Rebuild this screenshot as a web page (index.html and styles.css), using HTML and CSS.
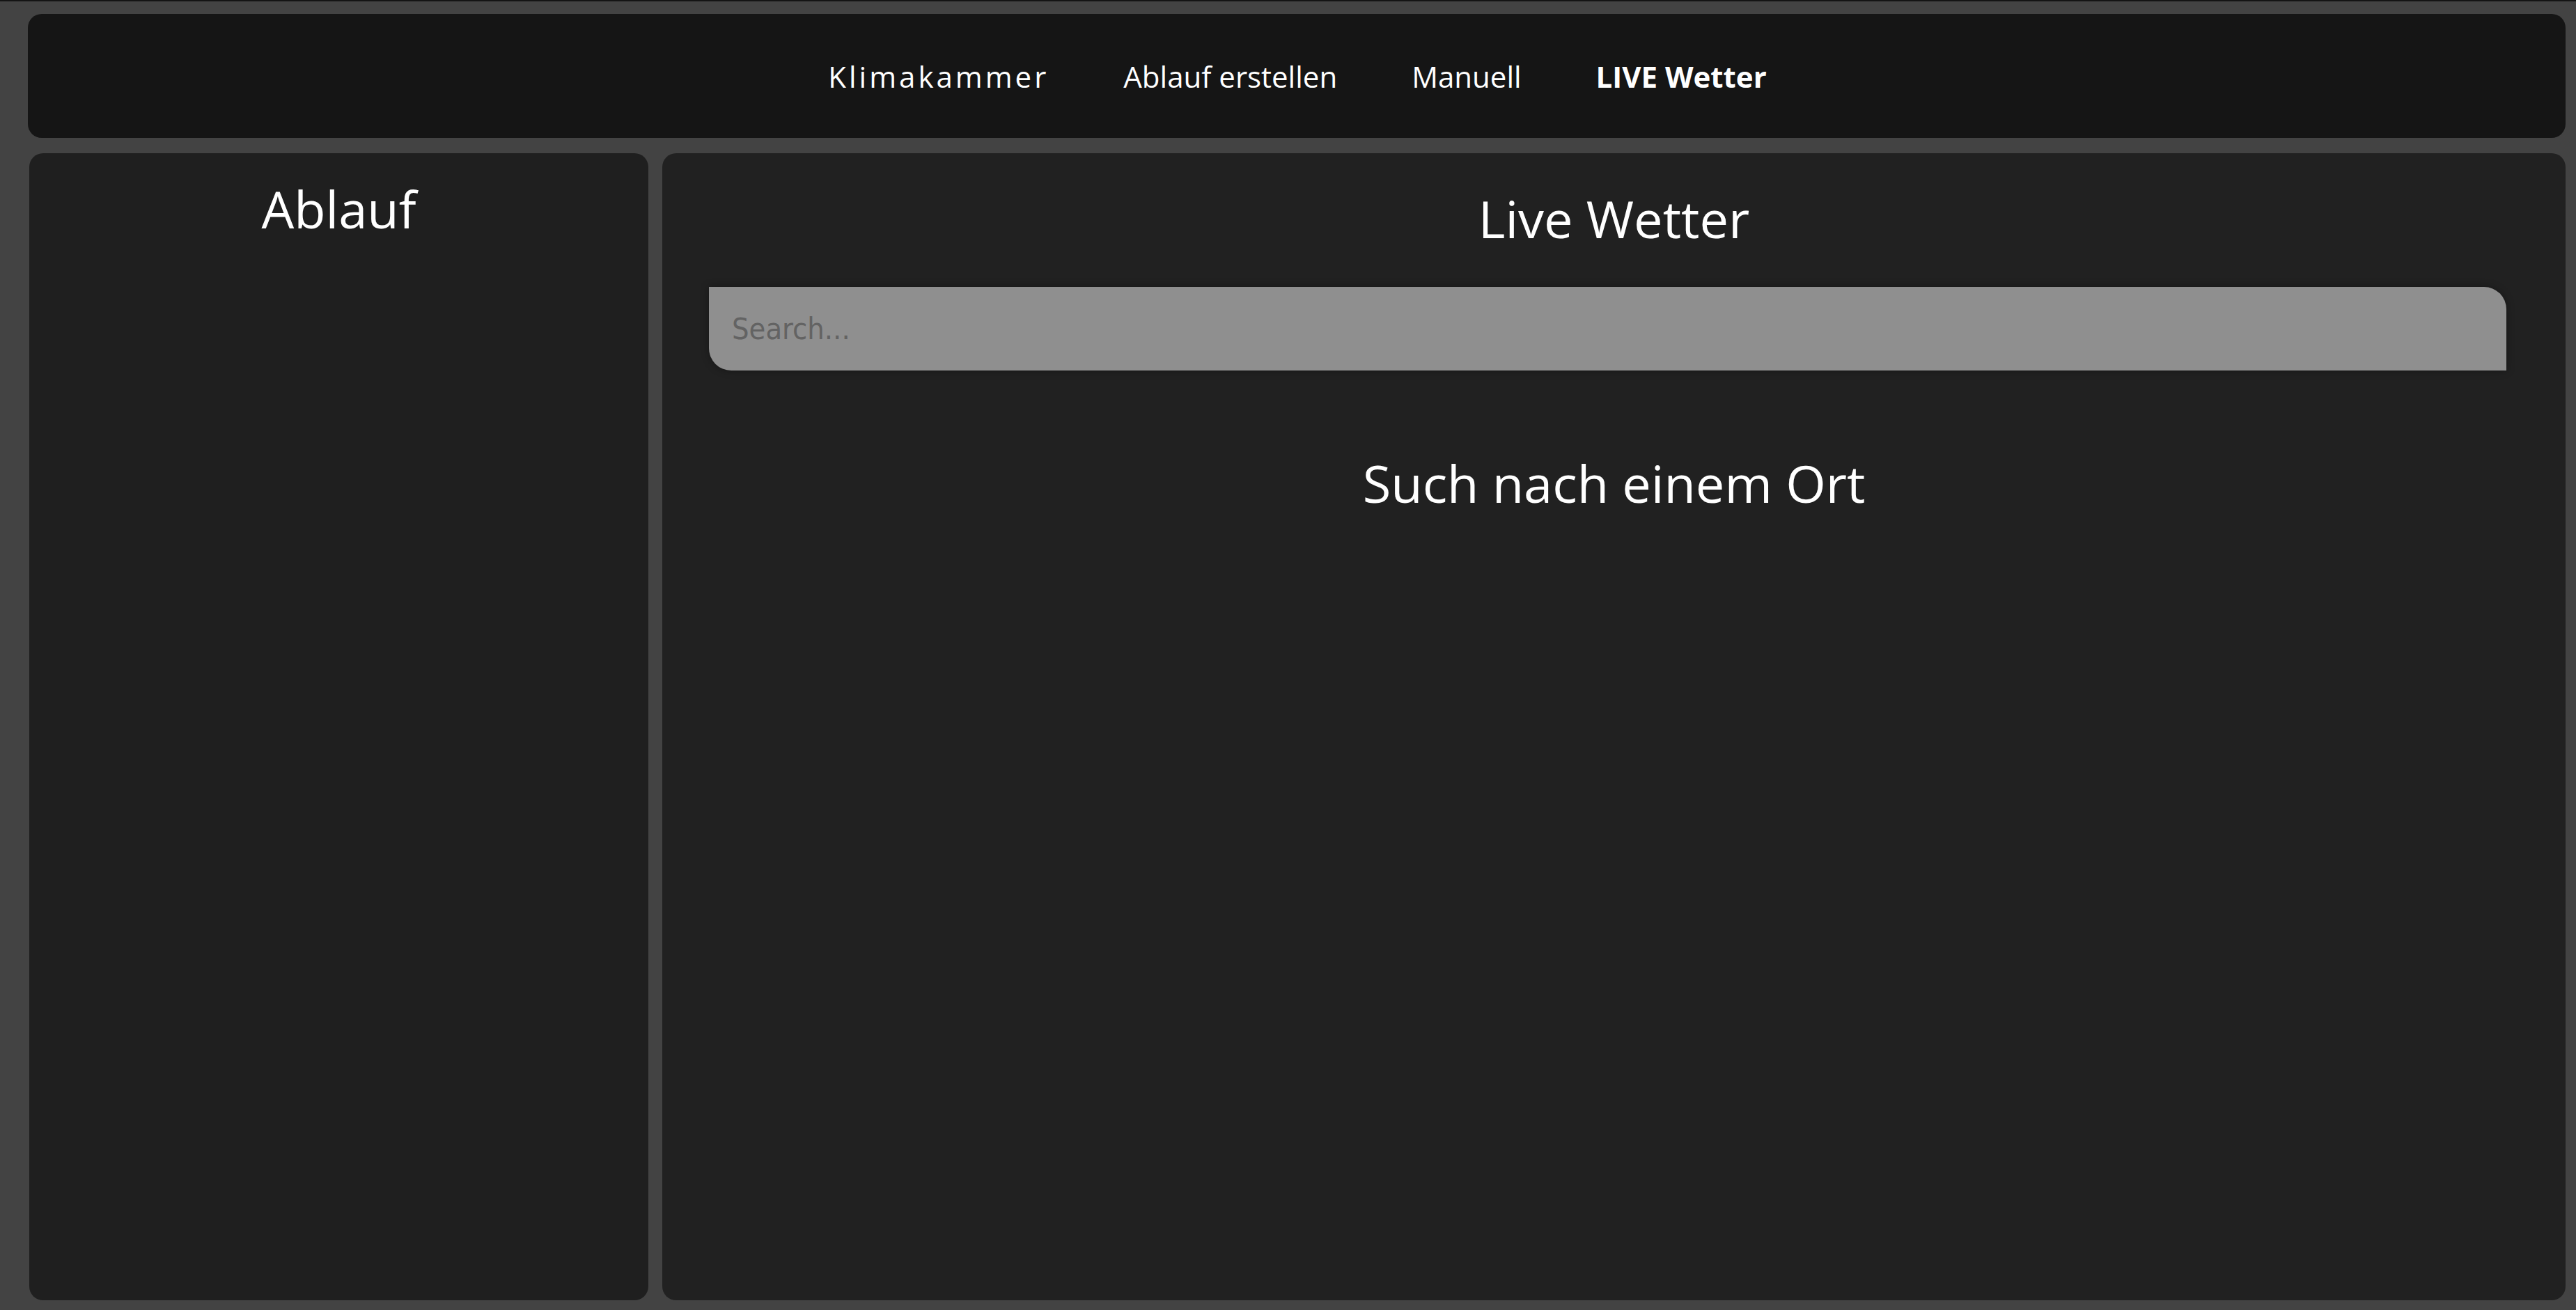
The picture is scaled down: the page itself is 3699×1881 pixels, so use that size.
FILE: index.html
```html
<!DOCTYPE html>
<html lang="de">
<head>
<meta charset="utf-8">
<title>LIVE Wetter</title>
<link rel="stylesheet" href="styles.css">
</head>
<body>
<div class="page">
  <nav class="navbar">
    <a class="nav-link brand" href="#">Klimakammer</a>
    <a class="nav-link" href="#">Ablauf erstellen</a>
    <a class="nav-link" href="#">Manuell</a>
    <a class="nav-link active" href="#">LIVE Wetter</a>
  </nav>
  <div class="content">
    <aside class="sidebar">
      <h2 class="panel-title sidebar-title">Ablauf</h2>
    </aside>
    <main class="main">
      <h2 class="panel-title main-title">Live Wetter</h2>
      <input class="search" type="text" placeholder="Search...">
      <p class="empty">Such nach einem Ort</p>
    </main>
  </div>
</div>
</body>
</html>
```
FILE: styles.css
```css
* { box-sizing: border-box; }
html, body { margin: 0; padding: 0; height: 100%; }
body {
  background: #434343;
  border-top: 2px solid #141414;
  font-family: "Open Sans", "Noto Sans", sans-serif;
  color: #ffffff;
}
.page {
  height: 100%;
  display: flex;
  flex-direction: column;
  padding: 18px 15px 14px 40px;
  gap: 22px;
}
.navbar {
  flex: 0 0 178px;
  background: #151515;
  border-radius: 20px;
  display: flex;
  align-items: center;
  justify-content: center;
  gap: 107px;
  padding-left: 2px;
}
.nav-link {
  color: #ffffff;
  text-decoration: none;
  font-size: 42px;
}
.brand { letter-spacing: 4px; }
.active { font-weight: 700; letter-spacing: 0; }
.content {
  flex: 1;
  display: flex;
  gap: 20px;
  padding-left: 2px;
}
.sidebar {
  flex: 0 0 889px;
  background: #1f1f1f;
  border-radius: 20px;
}
.main {
  flex: 1;
  background: #212121;
  border-radius: 20px;
  display: flex;
  flex-direction: column;
  align-items: stretch;
}
.panel-title {
  margin: 0;
  font-weight: 400;
  font-size: 74px;
  line-height: 98px;
  text-align: center;
}
.sidebar-title { margin-top: 31px; }
.main-title { margin-top: 45px; }
.search {
  margin: 49px 85px 0 67px;
  height: 120px;
  border: none;
  outline: none;
  background: #8f8f8f;
  border-radius: 0 32px 0 32px;
  box-shadow: 0 0 12px rgba(0, 0, 0, 0.35);
  padding: 0 33px;
  font-family: "DejaVu Sans Condensed", "DejaVu Sans", sans-serif;
  font-stretch: condensed;
  font-size: 43px;
  color: #333333;
}
.search::placeholder { color: #636363; }
.empty {
  margin: 113px 0 0 0;
  font-size: 74px;
  line-height: 98px;
  text-align: center;
}
```
